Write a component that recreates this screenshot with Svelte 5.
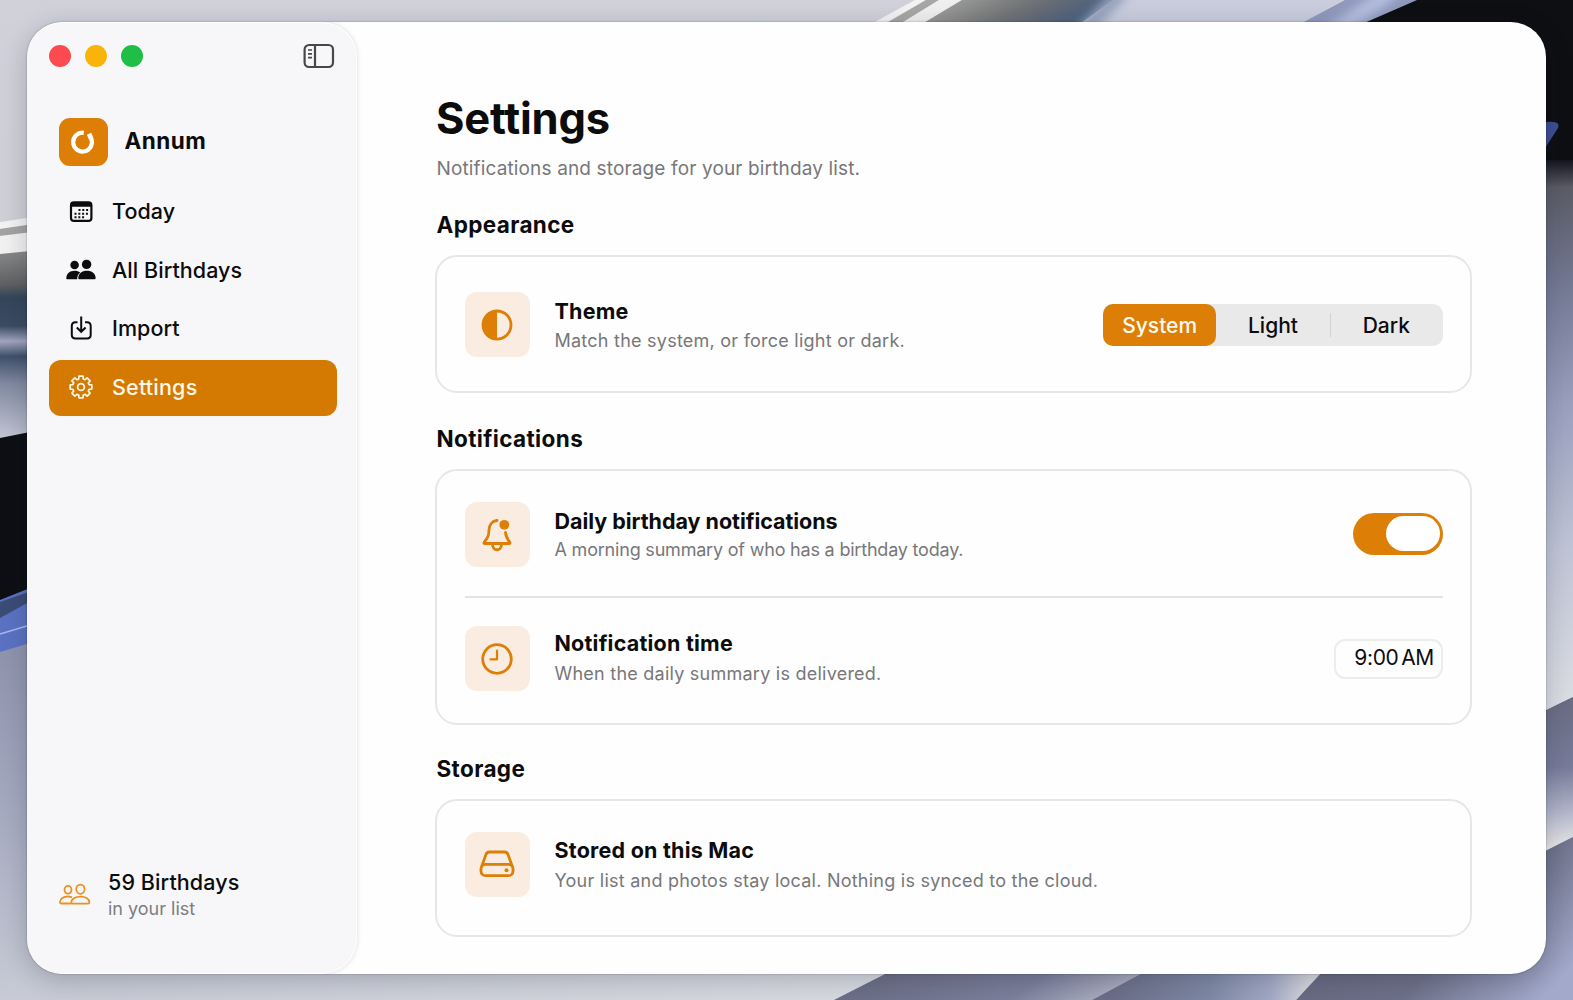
<script>
  let active = $state('settings');
  let theme = $state('System');
  let notify = $state(true);
  let collapsed = $state(false);
  let time = '9:00 AM';

  const themes = ['System', 'Light', 'Dark'];
  const nav = [
    { id: 'today', label: 'Today' },
    { id: 'all', label: 'All Birthdays' },
    { id: 'import', label: 'Import' },
    { id: 'settings', label: 'Settings' }
  ];

  // eight-toothed gear outline
  function gearPath(cx, cy, outer, inner) {
    const pts = [];
    for (let i = 0; i < 8; i++) {
      const a = (i * Math.PI) / 4;
      for (const [d, r] of [[-0.27, inner], [-0.19, outer], [0.19, outer], [0.27, inner]]) {
        pts.push(`${(cx + r * Math.sin(a + d)).toFixed(2)} ${(cy - r * Math.cos(a + d)).toFixed(2)}`);
      }
    }
    return 'M' + pts.join('L') + 'Z';
  }

  const gear = gearPath(15, 14, 11, 8.4);
</script>

<div class="desktop">
  <svg class="wallpaper" viewBox="0 0 1573 1000" preserveAspectRatio="none" aria-hidden="true">
    <defs>
      <filter id="soft" x="-50%" y="-50%" width="200%" height="200%"><feGaussianBlur stdDeviation="5" /></filter>
      <linearGradient id="base" x1="0" y1="0" x2="0" y2="1">
        <stop offset="0" stop-color="#d0d1da" />
        <stop offset=".22" stop-color="#cfcfd6" />
        <stop offset=".65" stop-color="#8f94ad" />
        <stop offset=".8" stop-color="#a3a8bf" />
        <stop offset="1" stop-color="#c8cbd5" />
      </linearGradient>
      <linearGradient id="floor" x1="0" y1="0" x2="900" y2="0" gradientUnits="userSpaceOnUse">
        <stop offset="0" stop-color="#d6d8e0" stop-opacity="0" />
        <stop offset="1" stop-color="#d9dbe2" />
      </linearGradient>
      <linearGradient id="right" x1="0" y1="160" x2="0" y2="712" gradientUnits="userSpaceOnUse">
        <stop offset="0" stop-color="#14151f" />
        <stop offset=".05" stop-color="#5b5c66" />
        <stop offset=".22" stop-color="#737893" />
        <stop offset=".45" stop-color="#9ba1bf" />
        <stop offset=".7" stop-color="#bfc4d6" />
        <stop offset="1" stop-color="#dddfe4" />
      </linearGradient>
      <linearGradient id="fold" x1="0" y1="700" x2="0" y2="850" gradientUnits="userSpaceOnUse">
        <stop offset="0" stop-color="#696c82" />
        <stop offset=".45" stop-color="#777c9b" />
        <stop offset=".75" stop-color="#b3b7cb" />
        <stop offset="1" stop-color="#ecebea" />
      </linearGradient>
      <linearGradient id="corner" x1="1400" y1="860" x2="1540" y2="1000" gradientUnits="userSpaceOnUse">
        <stop offset="0" stop-color="#666980" />
        <stop offset=".5" stop-color="#6d7189" />
        <stop offset="1" stop-color="#a3a9cb" />
      </linearGradient>
      <linearGradient id="under" x1="880" y1="940" x2="1010" y2="1140" gradientUnits="userSpaceOnUse">
        <stop offset="0" stop-color="#666980" />
        <stop offset=".5" stop-color="#7b7f9b" />
        <stop offset=".75" stop-color="#b0b4c6" />
        <stop offset="1" stop-color="#e0e0e1" />
      </linearGradient>
      <linearGradient id="under2" x1="1110" y1="0" x2="1310" y2="0" gradientUnits="userSpaceOnUse">
        <stop offset="0" stop-color="#6b6e88" />
        <stop offset=".5" stop-color="#7f89a5" />
        <stop offset=".8" stop-color="#a2a9c6" />
        <stop offset="1" stop-color="#d9d9dd" />
      </linearGradient>
      <linearGradient id="steel" x1="940" y1="0" x2="1015" y2="126" gradientUnits="userSpaceOnUse">
        <stop offset="0" stop-color="#a2a2a1" />
        <stop offset=".3" stop-color="#757778" />
        <stop offset=".42" stop-color="#646b76" />
        <stop offset=".6" stop-color="#4b6080" />
        <stop offset=".8" stop-color="#334a66" />
        <stop offset="1" stop-color="#8492ad" />
      </linearGradient>
      <linearGradient id="steelLeft" x1="0" y1="250" x2="0" y2="440" gradientUnits="userSpaceOnUse">
        <stop offset="0" stop-color="#8a8a8a" />
        <stop offset=".18" stop-color="#5f6164" />
        <stop offset=".25" stop-color="#34465a" />
        <stop offset=".4" stop-color="#3b4c63" />
        <stop offset=".48" stop-color="#a3a5c0" />
        <stop offset=".56" stop-color="#3f506a" />
        <stop offset=".7" stop-color="#8089a0" />
        <stop offset="1" stop-color="#c4c7d5" />
      </linearGradient>
    </defs>
    <rect width="1573" height="1000" fill="url(#base)" />
    <rect y="960" width="900" height="40" fill="url(#floor)" />
    <!-- left edge -->
    <path d="M0 222L40 216V224L0 229Z" fill="#f2f2f2" />
    <path d="M0 229L40 223V232L0 236Z" fill="#a3a3a3" />
    <path d="M0 236L40 231V251L0 255Z" fill="#f1f1f1" />
    <path d="M0 254L40 250V434L0 440Z" fill="url(#steelLeft)" />
    <path d="M0 438L40 430V600H0Z" fill="#0d0f14" />
    <path d="M0 600L40 584V640L0 652Z" fill="#5b72c4" />
    <path d="M0 602L40 588V596L0 618Z" fill="#3b4c77" />
    <path d="M0 634L40 622" stroke="#a9b8f0" stroke-width="1.5" />
    <!-- top edge -->
    <path d="M915 0H926L884 24H871Z" fill="#f3f3f3" />
    <path d="M926 0H939L900 24H885Z" fill="#a6a6a6" />
    <path d="M939 0H962L922 24H900Z" fill="#efefef" />
    <path d="M962 0H1113L1080 24H922Z" fill="url(#steel)" />
    <path d="M1113 0H1341L1301 24H1080Z" fill="#c9cddd" />
    <path d="M1124 -10L1080 34" stroke="#94a1bb" stroke-width="14" filter="url(#soft)" />
    <path d="M1345 0H1420L1365 24H1300Z" fill="#9099bd" />
    <path d="M1392 -8L1330 34" stroke="#b4bdde" stroke-width="16" filter="url(#soft)" />
    <path d="M1417 0H1573V172H1480V24H1362Z" fill="#0e0f12" />
    <!-- right edge -->
    <path d="M1530 160H1573V697L1530 718Z" fill="url(#right)" />
    <path d="M1540 123Q1562 119 1558 128L1540 156Z" fill="#3f4e94" />
    <path d="M1530 718L1573 697V837L1530 859Z" fill="url(#fold)" />
    <path d="M1500 874L1573 837V1000H1296L1322 970H1500Z" fill="url(#corner)" />
    <!-- bottom edge -->
    <path d="M893 970H1148L1092 1000H834Z" fill="url(#under)" />
    <path d="M1148 970H1324L1296 1000H1092Z" fill="url(#under2)" />
  </svg>

  <div class="window">
    <aside class="sidebar">
      <div class="titlebar">
        <div class="lights">
          <span class="light red"></span>
          <span class="light yellow"></span>
          <span class="light green"></span>
        </div>
        <button class="toggle-sidebar" aria-label="Toggle sidebar" onclick={() => (collapsed = !collapsed)}>
          <svg width="32" height="26" viewBox="0 0 32 26" fill="none" stroke="#47474a" stroke-width="2.2">
            <rect x="1.6" y="2" width="28.4" height="22" rx="4.5" />
            <path d="M12 2V24" />
            <path d="M5 7H9M5 10.8H9M5 14.6H9" stroke-width="1.7" />
          </svg>
        </button>
      </div>

      <div class="brand">
        <div class="logo">
          <svg width="28" height="28" viewBox="0 0 28 28" fill="none" stroke="#fff" stroke-width="4.2">
            <path d="M14.8 4.8A9.4 9.4 0 1 0 22 10" />
            <path d="M20 5.8L22 10.2" stroke-width="4.8" />
          </svg>
        </div>
        <span>Annum</span>
      </div>

      <nav>
        {#each nav as item}
          <button class="nav-item" class:active={active === item.id} onclick={() => (active = item.id)}>
            <svg width="30" height="28" viewBox="0 0 30 28" fill="none" stroke="currentColor" stroke-width="2">
              {#if item.id === 'today'}
                <rect x="5" y="5.3" width="20.4" height="18.6" rx="3" stroke-width="2.2" />
                <path d="M5 7.8H25.4" stroke-width="4" />
                <path d="M12.5 13H23M8.5 16.7H23M8.5 20.3H19" stroke-dasharray="2 1.8" />
              {:else if item.id === 'all'}
                <g fill="currentColor" stroke="none">
                  <circle cx="8.6" cy="9" r="4.3" />
                  <circle cx="20.6" cy="8.4" r="4.7" />
                  <path d="M.3 22.5C.3 17.5 4 14.8 8.6 14.8C10.8 14.8 12.7 15.4 14.2 16.5C12.2 18 11.2 20 11.2 23.3H1.2Q.3 23.3 .3 22.5Z" />
                  <path d="M12.3 22.3C12.3 17.4 16 14.8 20.9 14.8C25.8 14.8 29.6 17.4 29.6 22.3Q29.6 23.3 28.6 23.3H13.3Q12.3 23.3 12.3 22.3Z" />
                </g>
              {:else if item.id === 'import'}
                <path d="M11.5 8.2H9.5Q5.8 8.2 5.8 11.9V20.8Q5.8 24.5 9.5 24.5H21Q24.7 24.5 24.7 20.8V11.9Q24.7 8.2 21 8.2H19" />
                <path d="M15.2 2.5V17.5M10.8 13.5L15.2 17.8L19.6 13.5" />
              {:else}
                <path d={gear} stroke-width="1.7" stroke-linejoin="round" />
                <circle cx="15" cy="14" r="3.4" stroke-width="1.7" />
              {/if}
            </svg>
            {item.label}
          </button>
        {/each}
      </nav>

      <div class="summary">
        <svg width="32" height="24" viewBox="0 0 32 24" fill="none" stroke="#e8921f" stroke-width="1.8">
          <ellipse cx="9" cy="6.8" rx="3.5" ry="3.9" />
          <ellipse cx="21.4" cy="6.2" rx="4.2" ry="4.6" />
          <path d="M12.5 20.5H2.2Q1 20.5 1 19.3C1 15.8 4.4 13.5 9 13.5Q11 13.5 13 14.3" />
          <path d="M13.8 20.7Q12.4 20.7 12.4 19.3C12.4 16 16 13.6 21.4 13.6S30.4 16 30.4 19.3Q30.4 20.7 29 20.7Z" />
        </svg>
        <div>
          <div class="count">59 Birthdays</div>
          <div class="count-note">in your list</div>
        </div>
      </div>
    </aside>

    <main>
      <h1>Settings</h1>
      <p class="lead">Notifications and storage for your birthday list.</p>

      <h2>Appearance</h2>
      <section class="card">
        <div class="row theme-row">
          <div class="tile">
            <svg width="34" height="34" viewBox="0 0 34 34">
              <circle cx="17" cy="17" r="14" fill="none" stroke="#dd7f06" stroke-width="2.8" />
              <path d="M17 2.5A14.5 14.5 0 0 0 17 31.5Z" fill="#dd7f06" />
            </svg>
          </div>
          <div class="copy">
            <h3>Theme</h3>
            <p>Match the system, or force light or dark.</p>
          </div>
          <div class="segments">
            {#each themes as name}
              <button class:selected={theme === name} onclick={() => (theme = name)}>{name}</button>
            {/each}
          </div>
        </div>
      </section>

      <h2>Notifications</h2>
      <section class="card">
        <div class="row daily-row">
          <div class="tile">
            <svg width="34" height="36" viewBox="0 0 34 36" fill="none" stroke="#dd7f06" stroke-width="2.8" stroke-linejoin="round" stroke-linecap="round">
              <path d="M17 3.5C12 4 9.2 8 9 13C8.8 19 7.6 21 4.2 25.2Q3.4 26.5 5 26.5H29Q30.6 26.5 29.8 25.2C27 22 26 20.3 25.5 15.5" />
              <path d="M12.5 27.5C13 34.5 21 34.5 21.5 27.5" />
              <circle cx="24.3" cy="7.8" r="4.9" fill="#dd7f06" stroke="none" />
            </svg>
          </div>
          <div class="copy">
            <h3>Daily birthday notifications</h3>
            <p>A morning summary of who has a birthday today.</p>
          </div>
          <button class="switch" class:on={notify} role="switch" aria-checked={notify} aria-label="Daily birthday notifications" onclick={() => (notify = !notify)}>
            <span></span>
          </button>
        </div>
        <div class="row time-row">
          <div class="tile">
            <svg width="34" height="34" viewBox="0 0 34 34" fill="none" stroke="#dd7f06" stroke-width="2.8" stroke-linecap="round" stroke-linejoin="round">
              <circle cx="17" cy="17" r="14.3" />
              <path d="M17 8.5V17.3H10.5" stroke-width="2.2" />
            </svg>
          </div>
          <div class="copy">
            <h3>Notification time</h3>
            <p>When the daily summary is delivered.</p>
          </div>
          <div class="time">{time}</div>
        </div>
      </section>

      <h2 class="storage-title">Storage</h2>
      <section class="card">
        <div class="row storage-row">
          <div class="tile">
            <svg width="36" height="28" viewBox="0 0 36 28" fill="none" stroke="#dd7f06" stroke-width="2.8" stroke-linejoin="round">
              <path d="M2.5 17L7 4.4Q8 2 10.4 2H25.6Q28 2 29 4.4L33.5 17" />
              <rect x="2" y="14.3" width="32" height="11.4" rx="4.5" />
              <circle cx="27.5" cy="20.2" r="2" fill="#dd7f06" stroke="none" />
            </svg>
          </div>
          <div class="copy">
            <h3>Stored on this Mac</h3>
            <p>Your list and photos stay local. Nothing is synced to the cloud.</p>
          </div>
        </div>
      </section>
    </main>
  </div>
</div>

<style>
  :global(body) {
    margin: 0;
    overflow: hidden;
  }

  .desktop {
    position: relative;
    box-sizing: border-box;
    width: 1573px;
    height: 1000px;
    padding: 22px 27px 26px;
    font-family: Inter, 'Liberation Sans', sans-serif;
    color: #0c0c0d;
  }

  .wallpaper {
    position: absolute;
    inset: 0;
    width: 100%;
    height: 100%;
  }

  .window {
    position: relative;
    display: flex;
    height: 952px;
    border-radius: 35px;
    background: #fefefe;
    overflow: hidden;
    box-shadow: 0 0 2px rgba(0, 0, 0, 0.35), 0 6px 26px rgba(20, 22, 40, 0.22);
  }

  h1, h2, h3, p {
    margin: 0;
  }

  button {
    padding: 0;
    border: none;
    background: none;
    font: inherit;
    color: inherit;
    cursor: pointer;
  }

  .sidebar {
    box-sizing: border-box;
    display: flex;
    flex-direction: column;
    flex: none;
    width: 330px;
    padding: 21px 19px 51px 22px;
    border: 1px solid #fff;
    border-left-width: 0;
    border-radius: 35px;
    background: #f7f7f9;
    box-shadow: 0 0 5px rgba(0, 0, 0, 0.15);
  }

  .titlebar {
    display: flex;
    justify-content: space-between;
    align-items: center;
    height: 24px;
    padding-right: 2px;
  }

  .lights {
    display: flex;
    gap: 14px;
  }

  .light {
    width: 22px;
    height: 22px;
    border-radius: 50%;
  }

  .red { background: #fb4b50; }
  .yellow { background: #f8b408; }
  .green { background: #1fbe47; }

  .toggle-sidebar {
    display: flex;
  }

  .brand {
    display: flex;
    align-items: center;
    gap: 17px;
    margin: 49.5px 0 0 10px;
    font-size: 22.5px;
    font-weight: 700;
    letter-spacing: 0.5px;
  }

  .brand span {
    padding-bottom: 2px;
  }

  .logo {
    display: flex;
    align-items: center;
    justify-content: center;
    width: 48.5px;
    height: 48px;
    border-radius: 11px;
    background: #dd7f06;
  }

  nav {
    display: flex;
    flex-direction: column;
    gap: 2.7px;
    margin-top: 18.5px;
  }

  .nav-item {
    display: flex;
    align-items: center;
    gap: 16px;
    box-sizing: border-box;
    height: 56px;
    padding: 0 0 2px 17px;
    border-radius: 12px;
    font-size: 21.5px;
    font-weight: 450;
    letter-spacing: 0.06px;
  }

  .nav-item.active {
    background: #d47902;
    color: #fff8e8;
    font-weight: 500;
    letter-spacing: 0.2px;
  }

  .summary {
    display: flex;
    align-items: center;
    gap: 17px;
    margin-top: auto;
    padding-left: 10px;
  }

  .count {
    font-size: 21.5px;
    font-weight: 500;
    line-height: 28px;
    letter-spacing: 0.1px;
  }

  .count-note {
    font-size: 18px;
    line-height: 26px;
    color: #7d7d80;
  }

  main {
    flex: 1;
    padding: 69px 74px 0 78px;
  }

  h1 {
    padding-left: 1px;
    font-size: 43.5px;
    line-height: 54px;
    font-weight: 700;
    letter-spacing: -0.2px;
  }

  .lead {
    padding: 11px 0 0 1.5px;
    font-size: 19px;
    line-height: 26px;
    letter-spacing: 0.14px;
    color: #77777a;
  }

  h2 {
    margin: 29px 0 16px;
    padding-left: 1.5px;
    font-size: 22.5px;
    line-height: 28px;
    font-weight: 700;
    letter-spacing: 0.37px;
  }

  .card + h2 {
    margin-top: 32px;
  }

  .card + h2.storage-title {
    margin-top: 30px;
  }

  .card {
    border: 2px solid #e7e7e8;
    border-radius: 22px;
    padding: 0 27px 0 27.5px;
  }

  .row {
    display: flex;
    align-items: center;
    box-sizing: border-box;
    height: 134px;
  }

  .theme-row {
    padding-top: 1px;
  }

  .daily-row {
    height: 127px;
    padding-top: 2px;
    border-bottom: 2px solid #e3e3e4;
  }

  .time-row {
    height: 125px;
    padding-bottom: 4px;
  }

  .storage-row {
    padding-bottom: 8px;
  }

  .tile {
    display: flex;
    align-items: center;
    justify-content: center;
    flex: none;
    width: 65px;
    height: 65px;
    border-radius: 12px;
    background: #faece0;
  }

  .copy {
    flex: 1;
    display: flex;
    flex-direction: column;
    gap: 5px;
    margin-left: 25px;
  }

  h3 {
    font-size: 21.5px;
    line-height: 26px;
    font-weight: 700;
    letter-spacing: 0.22px;
  }

  .copy p {
    font-size: 18px;
    line-height: 24px;
    letter-spacing: 0.24px;
    color: #77777a;
  }

  .theme-row .copy {
    padding-top: 1px;
  }

  .daily-row .copy {
    gap: 4px;
  }

  .daily-row h3 {
    letter-spacing: -0.03px;
  }

  .daily-row p {
    letter-spacing: -0.2px;
  }

  .time-row .copy {
    gap: 6px;
    padding-bottom: 2px;
  }

  .storage-row .copy {
    gap: 6px;
    padding-top: 2px;
  }

  .segments {
    display: flex;
    width: 340px;
    height: 42px;
    border-radius: 10px;
    background: #e9e9ea;
  }

  .segments button {
    position: relative;
    flex: 1;
    padding-top: 1px;
    border-radius: 10px;
    font-size: 21px;
    font-weight: 450;
  }

  .segments button.selected {
    background: #dd7f06;
    color: #fffaf0;
    font-weight: 500;
  }

  .segments button:not(.selected) + button::before {
    content: '';
    position: absolute;
    left: 0;
    top: 9px;
    width: 1px;
    height: 24px;
    background: #d2d2d4;
  }

  .switch {
    display: flex;
    box-sizing: border-box;
    width: 90px;
    height: 42px;
    margin-bottom: 2px;
    padding: 3.5px;
    border-radius: 21px;
    background: #c9c9cc;
  }

  .switch.on {
    justify-content: flex-end;
    background: #dd7f06;
  }

  .switch span {
    width: 54px;
    height: 35px;
    border-radius: 18px;
    background: #fff;
  }

  .time {
    box-sizing: border-box;
    width: 109px;
    height: 40px;
    padding-right: 7px;
    border: 2px solid #ececed;
    border-radius: 11px;
    font-size: 21px;
    line-height: 34px;
    text-align: right;
    letter-spacing: -0.3px;
    word-spacing: -3px;
  }
</style>
